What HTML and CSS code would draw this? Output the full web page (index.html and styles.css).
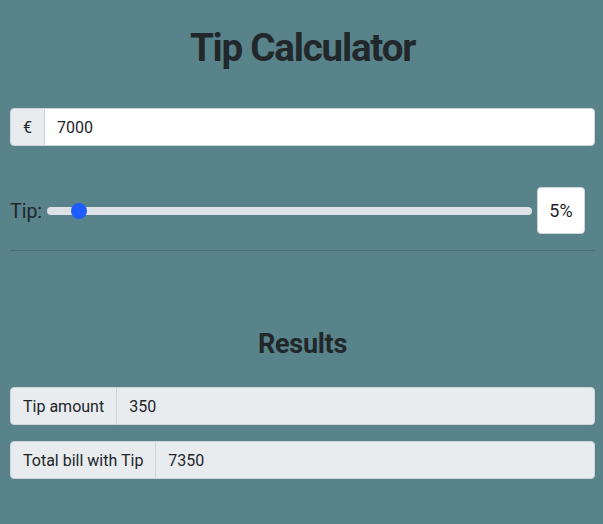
FILE: index.html
```html
<!DOCTYPE html>
<html>
<head>
<meta charset="utf-8">
<link rel="stylesheet" href="styles.css">
</head>
<body>
<div class="app">
  <h1 class="title">Tip Calculator</h1>
  <div class="group">
    <span class="addon">€</span>
    <input class="field" type="text" value="7000">
  </div>
  <div class="tip-row">
    <label class="tip-label">Tip:</label>
    <input class="range" type="range" min="0" max="100" value="5">
    <div class="pct">5%</div>
  </div>
  <hr class="rule">
  <h3 class="subtitle">Results</h3>
  <div class="group result">
    <span class="addon">Tip amount</span>
    <input class="field disabled" type="text" value="350" disabled>
  </div>
  <div class="group result">
    <span class="addon">Total bill with Tip</span>
    <input class="field disabled" type="text" value="7350" disabled>
  </div>
</div>
</body>
</html>
```
FILE: styles.css
```css
html, body {
  margin: 0;
  padding: 0;
  background: #58838a;
  height: 100%;
}
body {
  font-family: Roboto, "Liberation Sans", sans-serif;
  font-size: 16px;
  color: #212529;
}
.app {
  padding: 24px 8px 0 10px;
}
.title {
  margin: 0 0 36px;
  font-size: 38.5px;
  font-weight: 700;
  letter-spacing: -1.2px;
  line-height: 48px;
  text-align: center;
  color: #22272b;
}
.group {
  display: flex;
  height: 38px;
  box-sizing: border-box;
}
.addon {
  display: flex;
  align-items: center;
  padding: 0 12px;
  background: #e9ecef;
  border: 1px solid #ced4da;
  border-radius: 4px 0 0 4px;
  font-size: 16px;
  white-space: nowrap;
}
.field {
  flex: 1;
  min-width: 0;
  margin: 0;
  margin-left: -1px;
  padding: 0 12px;
  border: 1px solid #ced4da;
  border-radius: 0 4px 4px 0;
  background: #fff;
  font-family: inherit;
  font-size: 16px;
  color: #212529;
  outline: none;
}
.field.disabled {
  background: #e9ecef;
  opacity: 1;
  color: #212529;
  -webkit-text-fill-color: #212529;
}
.tip-row {
  display: flex;
  align-items: center;
  margin-top: 41px;
  padding-right: 10px;
}
.tip-label {
  font-size: 19.5px;
  color: #212529;
  margin-right: 5px;
  position: relative;
  top: 1px;
}
.range {
  -webkit-appearance: none;
  appearance: none;
  flex: 1;
  height: 16px;
  margin: 0 5px 0 0;
  background: transparent;
}
.range::-webkit-slider-runnable-track {
  height: 8px;
  background: #dee2e6;
  border-radius: 4px;
}
.range::-webkit-slider-thumb {
  -webkit-appearance: none;
  width: 16px;
  height: 16px;
  margin-top: -4px;
  border-radius: 50%;
  background: #1f5cff;
  border: none;
}
.pct {
  width: 48px;
  height: 47px;
  box-sizing: border-box;
  display: flex;
  align-items: center;
  justify-content: center;
  background: #fff;
  border: 1px solid #ced4da;
  border-radius: 4px;
  font-size: 18px;
}
.rule {
  margin: 16px 0 0;
  border: 0;
  border-top: 1px solid #4a6e74;
}
.subtitle {
  margin: 76px 0 26px;
  font-size: 27px;
  font-weight: 700;
  letter-spacing: -0.3px;
  line-height: 34px;
  text-align: center;
  color: #22272b;
}
.result {
  margin-bottom: 16px;
}
```
